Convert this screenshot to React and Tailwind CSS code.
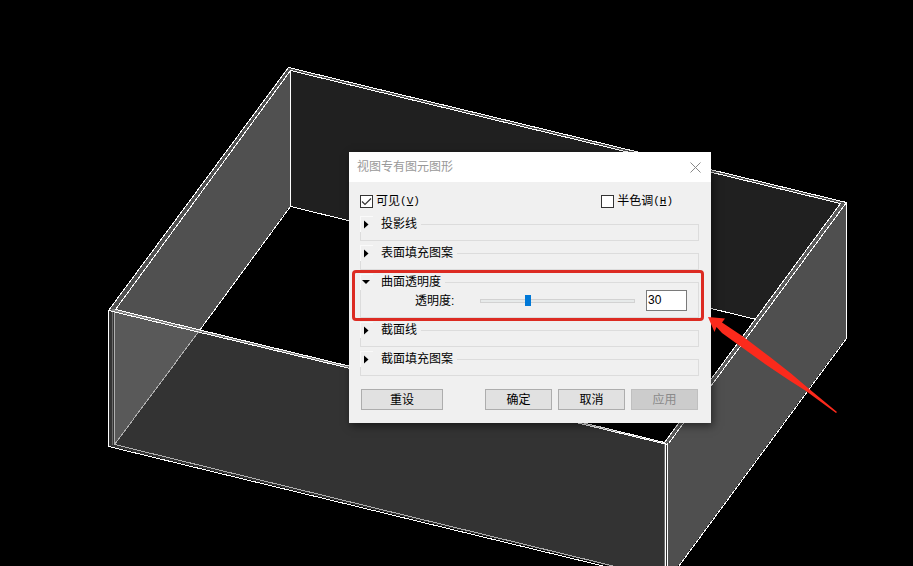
import React, { useState } from "react";

const FONT = "font-['Liberation_Sans','Noto_Sans_CJK_SC',sans-serif]";

function Scene() {
  return (
    <svg
      className="block h-full w-full"
      viewBox="0 0 913 566"
      preserveAspectRatio="xMidYMid slice"
      shapeRendering="crispEdges"
      aria-hidden="true"
    >
      {/* walls */}
      <path d="M290 70L840 204L756 319L290 206Z" fill="#202020" />
      <path d="M290 70V206L199 331L115 310Z" fill="#505050" />
      <path d="M109 310L667 444V580L109 446Z" fill="#333333" />
      <path d="M115 311L199 331L115 444Z" fill="#595959" />
      <path d="M846 202V338L667 581V444Z" fill="#4f4f4f" />

      {/* top rims */}
      <path d="M288 67L846 202L840 204L290 70Z" fill="#505050" />
      <path d="M288 67L290 70L115 310L109 310Z" fill="#505050" />
      <path d="M846 202L667 444L664 442L840 204Z" fill="#5c5c5c" />
      <path d="M109 310L115 309L664 442L667 444Z" fill="#858585" />

      <g fill="none" stroke="#fff" strokeWidth="1">
        <path d="M288.5 67.5L846.5 202.5L668.5 443.5" />
        <path d="M288.5 67.5L108.5 310.5L667.5 444.5" />
        <path d="M290.5 70.5L840.5 203.5L664.5 442.5L115.5 309.5Z" />
        <path d="M290.5 70V206.5L756.5 319.5" />
        <path d="M290.5 206.5L199.5 330.5" />
        <path d="M108.5 310V446.5L667.5 581.5" />
        <path d="M846.5 202V338.5L667.5 581.5" />
        <path d="M665.5 443V570M667.5 443V570" />
      </g>
      <g fill="none" stroke="#b0b0b0" strokeWidth="1">
        <path d="M199.5 330.5L114.5 444.5" />
        <path d="M114.5 312V444.5L664.5 578.5" />
      </g>
      <path d="M112.5 312V445M664.5 444V570" stroke="#6b6b6b" />
    </svg>
  );
}

function CheckField({ label, hotkey, checked, onChange }) {
  return (
    <label className="flex h-4 items-center gap-[3px] leading-4">
      <span className="relative flex">
        <input
          type="checkbox"
          checked={checked}
          onChange={onChange}
          className="size-[13px] appearance-none border border-[#333] bg-white"
        />
        {checked && (
          <svg
            className="pointer-events-none absolute inset-0 size-[13px]"
            viewBox="0 0 13 13"
            fill="none"
            stroke="#333"
            strokeWidth="1.2"
          >
            <path d="M2 6.5L5 9.5L11 3.5" />
          </svg>
        )}
      </span>
      <span className="flex items-center">
        {label}
        <span className="font-['Liberation_Mono',monospace] text-[11px]">
          (<u>{hotkey}</u>)
        </span>
      </span>
    </label>
  );
}

function Group({ title, open, children }) {
  return (
    <fieldset className="min-w-0 border border-[#dcdcdc]">
      <legend className="-ml-px bg-[#f0f0f0] pr-1">
        <button
          type="button"
          aria-expanded={!!open}
          className="flex h-4 items-center gap-2 leading-4"
        >
          <span className="flex h-4 w-[13px] items-center border-l border-t border-[#fafafa] pl-px">
            <svg width="9" height="9" viewBox="0 0 9 9" fill="#000">
              {open ? <path d="M0 2H8L4 6Z" /> : <path d="M2 0.500V8.500L6.500 4.500Z" />}
            </svg>
          </span>
          {title}
        </button>
      </legend>
      {children || <div className="h-2" />}
    </fieldset>
  );
}

function DialogButton({ children, className, disabled }) {
  return (
    <button
      type="button"
      disabled={disabled}
      className={`h-[21px] border leading-4 ${
        disabled
          ? "border-[#bfbfbf] bg-[#cccccc] text-[#8a8a8a]"
          : "border-[#adadad] bg-[#e1e1e1] text-black"
      } ${className}`}
    >
      {children}
    </button>
  );
}

function GraphicsDialog() {
  const [visible, setVisible] = useState(true);
  const [halftone, setHalftone] = useState(false);
  const [transparency, setTransparency] = useState(30);

  return (
    <section
      role="dialog"
      aria-labelledby="dialog-title"
      className="absolute left-[349px] top-[152px] w-[362px] bg-[#f0f0f0] text-xs text-black shadow-[2px_3px_8px_rgba(0,0,0,0.5)]"
    >
      <header className="flex h-[30px] items-center justify-between bg-white pl-2 pr-[10px]">
        <h1 id="dialog-title" className="text-[#999]">
          视图专有图元图形
        </h1>
        <button type="button" aria-label="关闭">
          <svg width="11" height="11" viewBox="0 0 11 11" stroke="#888">
            <path d="M0.500 0.500L10.500 10.500M10.500 0.500L0.500 10.500" />
          </svg>
        </button>
      </header>

      <div className="px-3 pb-[13px] pt-[11px]">
        <div className="-ml-px flex justify-between pr-[26px]">
          <CheckField
            label="可见"
            hotkey="V"
            checked={visible}
            onChange={() => setVisible(!visible)}
          />
          <CheckField
            label="半色调"
            hotkey="H"
            checked={halftone}
            onChange={() => setHalftone(!halftone)}
          />
        </div>

        <div className="-ml-px mt-[7px] flex flex-col gap-1">
          <Group title="投影线" />
          <Group title="表面填充图案" />
          <div className="relative">
            <Group title="曲面透明度" open>
              <div className="flex items-center pb-[6px] pl-[54px] pr-[11px]">
                <label htmlFor="transparency" className="w-[65px]">
                  透明度:
                </label>
                <input
                  id="transparency"
                  type="range"
                  min="0"
                  max="100"
                  value={transparency}
                  onChange={(e) => setTransparency(Number(e.target.value))}
                  className="h-3 min-w-0 flex-1 appearance-none bg-transparent [&::-webkit-slider-runnable-track]:h-1 [&::-webkit-slider-runnable-track]:border [&::-webkit-slider-runnable-track]:border-[#d2d2d2] [&::-webkit-slider-runnable-track]:bg-[#e7eaea] [&::-webkit-slider-thumb]:-mt-[5px] [&::-webkit-slider-thumb]:h-[11px] [&::-webkit-slider-thumb]:w-[6px] [&::-webkit-slider-thumb]:appearance-none [&::-webkit-slider-thumb]:bg-[#0078d7]"
                />
                <input
                  type="text"
                  aria-label="透明度"
                  value={transparency}
                  onChange={(e) => setTransparency(Number(e.target.value) || 0)}
                  className="ml-[11px] h-[21px] w-[41px] border border-[#7a7a7a] bg-white px-px pb-[2px]"
                />
              </div>
            </Group>
            <div className="pointer-events-none absolute -bottom-[3px] -left-2 -right-[5px] -top-1 z-10 rounded-[4px] border-3 border-[#dc2b22]" />
          </div>
          <Group title="截面线" />
          <Group title="截面填充图案" />
        </div>

        <div className="mt-[13px] flex justify-between pr-px">
          <DialogButton className="w-[82px]">重设</DialogButton>
          <div className="flex gap-[6px]">
            <DialogButton className="w-[67px]">确定</DialogButton>
            <DialogButton className="w-[67px]">取消</DialogButton>
            <DialogButton className="w-[67px]" disabled>
              应用
            </DialogButton>
          </div>
        </div>
      </div>
    </section>
  );
}

export default function App() {
  return (
    <main className={`relative h-screen overflow-hidden bg-black ${FONT}`}>
      <Scene />
      <GraphicsDialog />
      <svg
        className="pointer-events-none absolute left-[708px] top-[316px]"
        width="130"
        height="98"
        viewBox="708 316 130 98"
        fill="#fb2a1c"
        aria-hidden="true"
      >
        <path d="M708 317L725 318.500L722 322.500L743 336.500L770 357L791 373.500L808 388L837 412L836 413L806 391L788 379.500L765 364L740 346L722 333L716.500 327L714.500 332Z" />
      </svg>
    </main>
  );
}
